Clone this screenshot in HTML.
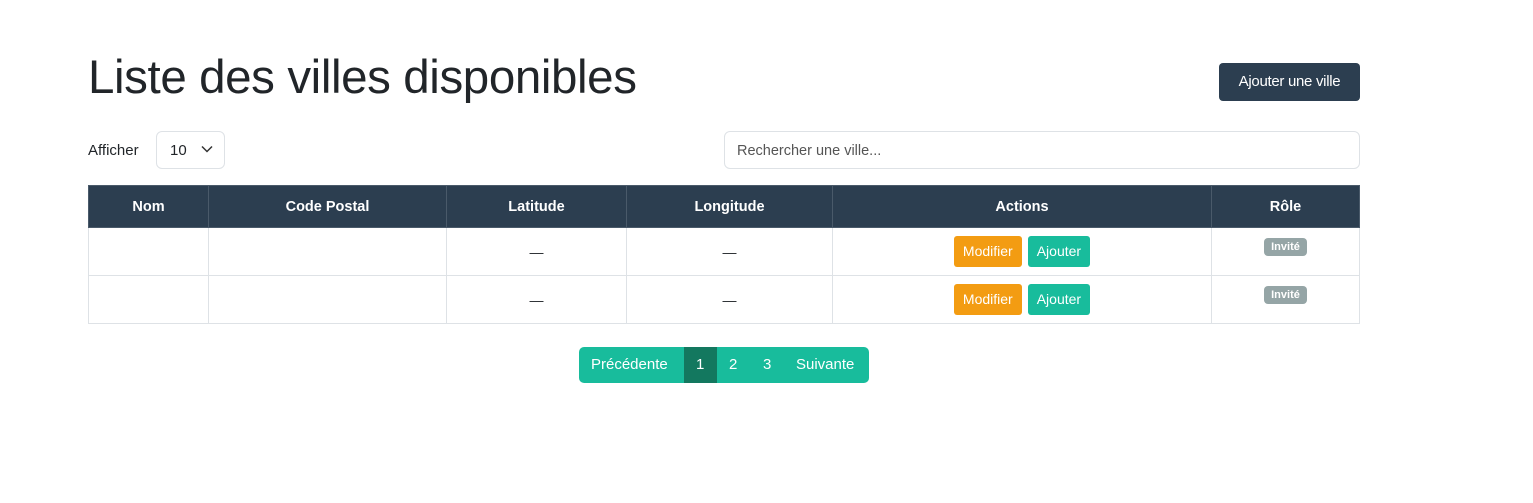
<!DOCTYPE html>
<html><head><meta charset="utf-8"><style>
*{box-sizing:border-box;margin:0;padding:0}
body{width:1533px;height:503px;background:#fff;font-family:"Liberation Sans",sans-serif;color:#212529;position:relative;overflow:hidden}
.a{position:absolute}
h1{position:absolute;left:88px;top:50px;font-size:47.5px;font-weight:400;color:#212529;letter-spacing:-0.4px;white-space:nowrap}
.btn{position:absolute;left:1219px;top:63px;width:141px;height:38px;background:#2c3e50;color:#fff;border-radius:4px;font-size:15px;text-align:center;line-height:38px;letter-spacing:-0.3px}
.sel{left:156px;top:131px;width:69px;height:38px;border:1px solid #dee2e6;border-radius:6px;font-size:15px;padding:10px 0 0 13px}
.search{left:724px;top:131px;width:636px;height:38px;border:1px solid #dee2e6;border-radius:6px;font-size:14.5px;padding:11px 12px;color:#555}
table{position:absolute;left:88px;top:185px;border-collapse:collapse;width:1272px}
th{background:#2c3e50;color:#fff;font-size:14.5px;height:42px;border:1px solid #4a5a6a;font-weight:700}
td{height:48px;border:1px solid #dee2e6;text-align:center;font-size:14px}
.b{display:inline-block;height:31px;line-height:31px;padding:0 9px;color:#fff;border-radius:3px;font-size:14px;margin:0 3px}
.badge{display:inline-block;background:#95a5a6;color:#fff;font-size:11px;font-weight:700;padding:3px 7px;border-radius:4px;position:relative;top:-5px}
.pg{left:579px;top:347px;height:36px;display:flex;border-radius:5px;overflow:hidden;background:#18bc9c;color:#fff;font-size:15px;line-height:36px}
.pg span{padding:0 12px}
</style></head><body>
<h1>Liste des villes disponibles</h1>
<div class="btn">Ajouter une ville</div>
<div class="a" style="left:88px;top:142px;font-size:15px">Afficher</div>
<div class="a sel">10 <svg width="12" height="8" style="margin-left:10px;vertical-align:2px" viewBox="0 0 12 8"><path d="M1 1.5l5 5 5-5" fill="none" stroke="#333" stroke-width="1.5"/></svg></div>
<div class="a search">Rechercher une ville...</div>
<table>
<tr><th style="width:120px">Nom</th><th style="width:238px">Code Postal</th><th style="width:180px">Latitude</th><th style="width:206px">Longitude</th><th style="width:379px">Actions</th><th>Rôle</th></tr>
<tr><td></td><td></td><td>—</td><td>—</td><td><span class="b" style="background:#f39c12">Modifier</span><span class="b" style="background:#18bc9c">Ajouter</span></td><td><span class="badge">Invité</span></td></tr>
<tr><td></td><td></td><td>—</td><td>—</td><td><span class="b" style="background:#f39c12">Modifier</span><span class="b" style="background:#18bc9c">Ajouter</span></td><td><span class="badge">Invité</span></td></tr>
</table>
<div class="a pg"><span style="width:105px">Précédente</span><span style="background:#13785f;width:33px">1</span><span style="width:34px">2</span><span style="width:33px">3</span><span style="width:85px">Suivante</span></div>
</body></html>
